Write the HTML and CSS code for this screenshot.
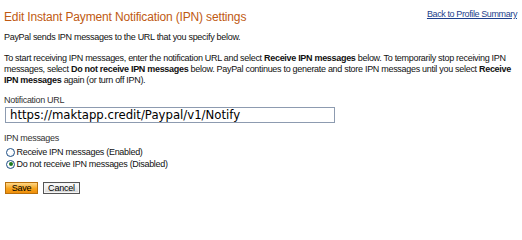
FILE: index.html
```html
<!DOCTYPE html>
<html>
<head>
<meta charset="utf-8">
<link rel="stylesheet" href="styles.css">
</head>
<body>
<div class="page">
  <div class="header">
    <h1 class="title">Edit Instant Payment Notification (IPN) settings</h1>
    <a class="back" href="#">Back to Profile Summary</a>
  </div>
  <p class="intro">PayPal sends IPN messages to the URL that you specify below.</p>
  <p class="desc">To start receiving IPN messages, enter the notification URL and select <b>Receive IPN messages</b> below. To temporarily stop receiving IPN messages, select <b>Do not receive IPN messages</b> below. PayPal continues to generate and store IPN messages until you select <b>Receive IPN messages</b> again (or turn off IPN).</p>
  <div class="field">
    <label class="label">Notification URL</label>
    <input class="url" type="text" value="https://maktapp.credit/Paypal/v1/Notify">
  </div>
  <div class="field ipn">
    <div class="label">IPN messages</div>
    <label class="radio"><input type="radio" name="ipn"><span>Receive IPN messages (Enabled)</span></label>
    <label class="radio"><input type="radio" name="ipn" checked><span>Do not receive IPN messages (Disabled)</span></label>
  </div>
  <div class="buttons">
    <button class="btn save">Save</button>
    <button class="btn cancel">Cancel</button>
  </div>
</div>
</body>
</html>
```
FILE: styles.css
```css
html, body { margin: 0; padding: 0; background: #fff; }
body { font-family: "Liberation Sans", Arial, sans-serif; font-size: 9px; line-height: 11px; color: #111; letter-spacing: -0.3px; }
.page { padding: 9px 5px 0 4px; }
.header { display: flex; justify-content: space-between; align-items: flex-start; }
.title { margin: 1px 0 0 0; font-size: 12px; line-height: 14px; font-weight: normal; color: #c05a12; letter-spacing: -0.15px; }
.back { color: #1d3f8c; font-size: 9px; line-height: 11px; letter-spacing: -0.39px; }
.intro { margin: 8px 0 0 0; }
.desc { margin: 9.5px 0 0 0; }
.desc b { font-weight: bold; }
.field { margin-top: 9.5px; color: #333; }
.label { display: block; }
.url { display: block; width: 330px; height: 16px; box-sizing: border-box; margin: 1px 0 0 1px; padding: 0 0 0 4px; border: 1px solid #8d9bb0; font-family: "DejaVu Sans", sans-serif; font-size: 11.7px; letter-spacing: 0; color: #000; outline: none; }
.ipn .label { margin-bottom: 2.5px; }
.radio { display: flex; align-items: center; height: 12px; line-height: 12px; margin-left: 2px; color: #111; }
.radio input { appearance: none; -webkit-appearance: none; margin: 0 1.5px 0 0; width: 9px; height: 9px; border: 1px solid #1f4f85; border-radius: 50%; background: radial-gradient(circle at 40% 40%, #fff 40%, #dfe6ee 100%); box-sizing: border-box; position: relative; }
.radio input:checked::after { content: ""; position: absolute; left: 1.5px; top: 1.5px; width: 4px; height: 4px; border-radius: 50%; background: #1c7a1c; }
.buttons { margin-top: 12px; display: flex; gap: 5px; margin-left: 1px; }
.btn { font-family: "Liberation Sans", Arial, sans-serif; font-size: 9px; letter-spacing: -0.2px; height: 12px; line-height: 10px; padding: 0; color: #000; box-sizing: border-box; }
.save { width: 33px; background: linear-gradient(#ffd888, #f7a41d 55%, #ee8e0a); border: 1px solid #b86f0b; }
.cancel { width: 37px; background: linear-gradient(#ffffff, #e8e8e8 60%, #d4d4d4); border: 1px solid #555; box-shadow: inset 0 0 0 1px #f4f4f4; }
```
